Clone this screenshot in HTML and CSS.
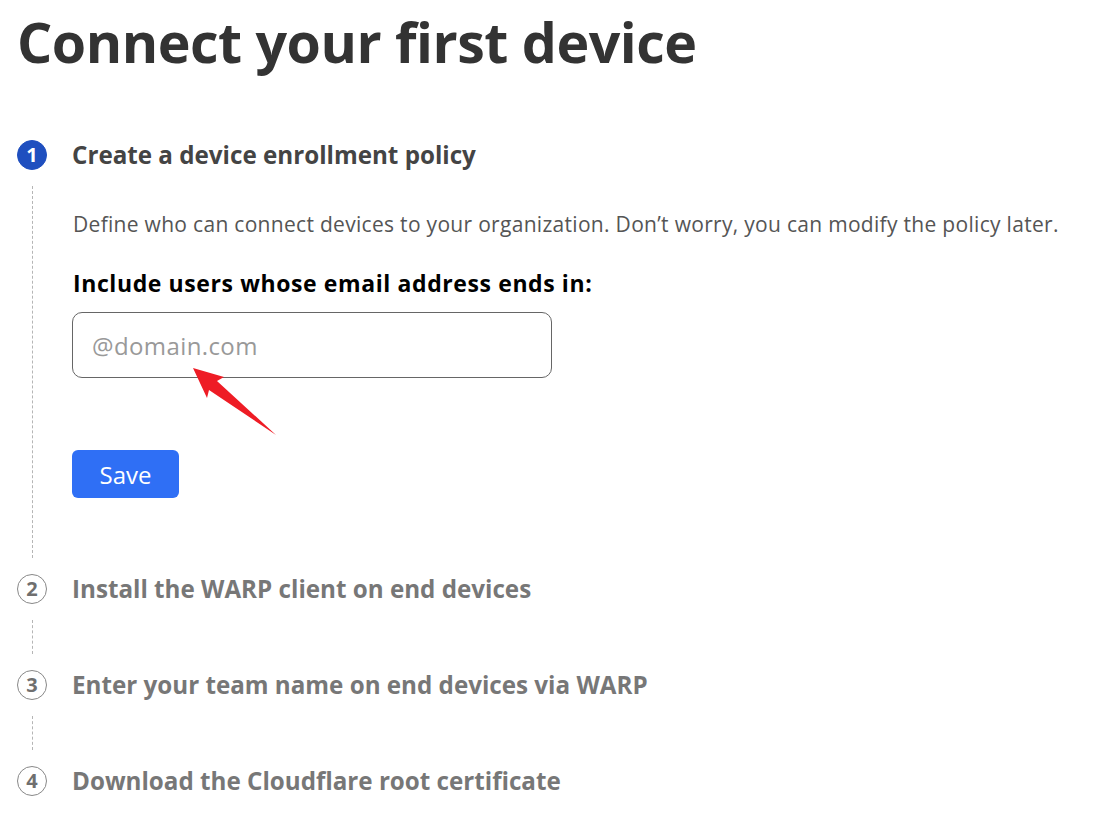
FILE: index.html
```html
<!DOCTYPE html>
<html lang="en">
<head>
<meta charset="utf-8">
<title>Connect your first device</title>
<link rel="stylesheet" href="styles.css">
</head>
<body>
<main class="page">
  <h1 class="title">Connect your first device</h1>
  <ol class="steps">
    <li class="step step-active">
      <div class="marker">
        <span class="num">1</span>
        <span class="line"></span>
      </div>
      <div class="content content-open">
        <h2 class="step-title">Create a device enrollment policy</h2>
        <p class="desc">Define who can connect devices to your organization. Don’t worry, you can modify the policy later.</p>
        <label class="label" for="domain">Include users whose email address ends in:</label>
        <div class="field">
          <input id="domain" class="input" type="text" placeholder="@domain.com">
          <svg class="arrow" width="100" height="80" viewBox="180 360 100 80" aria-hidden="true">
            <polygon points="193,368 224,377 217,381 276,435 209,390 207,398" fill="#ee1c25"/>
          </svg>
        </div>
        <button class="btn" type="button">Save</button>
      </div>
    </li>
    <li class="step">
      <div class="marker">
        <span class="num">2</span>
        <span class="line"></span>
      </div>
      <div class="content">
        <h2 class="step-title">Install the WARP client on end devices</h2>
      </div>
    </li>
    <li class="step">
      <div class="marker">
        <span class="num">3</span>
        <span class="line"></span>
      </div>
      <div class="content">
        <h2 class="step-title">Enter your team name on end devices via WARP</h2>
      </div>
    </li>
    <li class="step step-last">
      <div class="marker">
        <span class="num">4</span>
      </div>
      <div class="content">
        <h2 class="step-title">Download the Cloudflare root certificate</h2>
      </div>
    </li>
  </ol>
</main>
</body>
</html>
```
FILE: styles.css
```css
* { box-sizing: border-box; }
html, body { margin: 0; padding: 0; background: #fff; }
body {
  font-family: "Open Sans", "Noto Sans", sans-serif;
  color: #333;
}
.page {
  padding: 6px 0 0 17px;
}
.title {
  margin: 0;
  font-size: 55.5px;
  line-height: 72px;
  font-weight: 700;
  color: #333;
  letter-spacing: -0.5px;
}
.steps {
  list-style: none;
  margin: 62px 0 0 0;
  padding: 0;
}
.step {
  display: flex;
  gap: 25px;
}
.marker {
  width: 30px;
  display: flex;
  flex-direction: column;
  align-items: center;
  flex-shrink: 0;
}
.num {
  width: 30px;
  height: 30px;
  border-radius: 50%;
  border: 1.5px solid #888;
  color: #6f6f6f;
  font-size: 20px;
  font-weight: 700;
  display: flex;
  align-items: center;
  justify-content: center;
  line-height: 1;
}
.step-active .num {
  background: #1f4fbf;
  border-color: #1f4fbf;
  color: #fff;
}
.line {
  flex: 1;
  margin: 16px 0;
  border-left: 1px dashed #b5b5b5;
}
.content {
  flex: 1;
  padding-bottom: 66px;
}
.step-last .content { padding-bottom: 20px; }
.content-open { padding-bottom: 76px; }
.step-title {
  margin: 0;
  font-size: 24.2px;
  line-height: 30px;
  font-weight: 700;
  color: #777;
}
.step-active .step-title { color: #444; }
.desc {
  margin: 40px 0 0 1px;
  font-size: 21px;
  letter-spacing: 0.3px;
  line-height: 28px;
  color: #555;
}
.label {
  display: block;
  margin: 30px 0 0 1px;
  font-size: 23px;
  letter-spacing: 0.6px;
  line-height: 30px;
  font-weight: 700;
  color: #000;
}
.field {
  position: relative;
  margin-top: 14px;
  width: 480px;
}
.input {
  display: block;
  width: 480px;
  height: 66px;
  border: 1px solid #666;
  border-radius: 10px;
  padding: 0 19px;
  font-family: inherit;
  font-size: 24px;
  letter-spacing: 0.4px;
  color: #333;
  outline: none;
}
.input::placeholder { color: #999; }
.arrow {
  position: absolute;
  left: 108px;
  top: 48px;
}
.btn {
  display: block;
  margin-top: 72px;
  width: 107px;
  height: 48px;
  border: none;
  border-radius: 6px;
  background: #2f6ff5;
  color: #fff;
  font-family: inherit;
  font-size: 24px;
}
```
